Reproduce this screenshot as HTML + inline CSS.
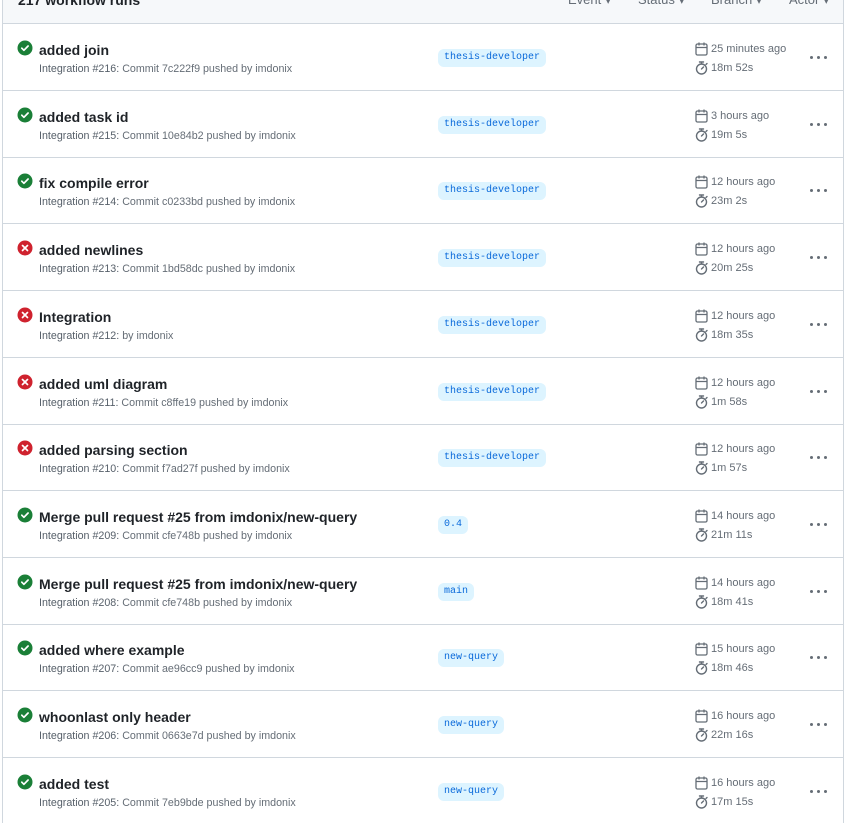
<!DOCTYPE html>
<html><head><meta charset="utf-8"><style>
*{box-sizing:border-box;margin:0;padding:0}
html,body{width:846px;height:823px;overflow:hidden}
body{background:#fff;font-family:"Liberation Sans",sans-serif;color:#1f2328;position:relative}
.box{position:absolute;left:2px;top:-10px;width:842px;height:840px;border:1px solid #d0d7de;}
.hdr{position:absolute;left:3px;top:-10px;width:840px;height:34px;background:#f6f8fa;border-bottom:1px solid #d0d7de}
.hdr .t{position:absolute;left:15px;top:0;font-size:14px;font-weight:bold;color:#1f2328;line-height:20px}
.hdr .f{position:absolute;top:0;font-size:13px;color:#656d76;line-height:20px}
.row{position:absolute;left:3px;width:840px;height:67px;border-bottom:1px solid #d0d7de}
.ic{position:absolute;left:14px;top:16px;width:16px;height:16px}
.ti{position:absolute;left:36px;top:16px;font-size:14px;font-weight:bold;line-height:20px;color:#1f2328}
.su{position:absolute;left:36px;top:37px;font-size:10.7px;line-height:16px;color:#656d76}
.su b{font-weight:normal;color:#57606a}
.br{position:absolute;left:435px;top:25px;height:18px;padding:0 6px;border-radius:6px;background:#ddf4ff;color:#0969da;font-family:"Liberation Mono",monospace;font-size:10px;line-height:18px}
.d1,.d2{position:absolute;left:692px;font-size:11px;color:#656d76;line-height:16px;padding-left:16px}
.d1{top:17px}.d2{top:36px}
.d1 svg,.d2 svg{position:absolute;left:0;top:1px}
.dots{position:absolute;left:807px;top:32px;width:18px;height:3px}
.dots i{position:absolute;top:0;width:3px;height:3px;border-radius:50%;background:#656d76}
</style></head><body>
<div class="box"></div>
<div class="hdr"><div class="t">217 workflow runs</div>
<div class="f" style="left:565px">Event ▾</div><div class="f" style="left:635px">Status ▾</div><div class="f" style="left:708px">Branch ▾</div><div class="f" style="left:786px">Actor ▾</div></div>
<div id="rows"></div>
<script>
const ok='<svg class="ic" viewBox="0 0 16 16"><circle cx="8" cy="8" r="7.5" fill="#1a7f37"/><path d="M4.8 8.2l2.1 2.1 4.2-4.3" stroke="#fff" stroke-width="1.7" fill="none" stroke-linecap="round" stroke-linejoin="round"/></svg>';
const bad='<svg class="ic" viewBox="0 0 16 16"><circle cx="8" cy="8" r="7.5" fill="#cf222e"/><path d="M5.5 5.5l5 5M10.5 5.5l-5 5" stroke="#fff" stroke-width="1.7" stroke-linecap="round"/></svg>';
const cal='<svg width="13" height="14" viewBox="0 0 13 14"><rect x="1" y="2" width="11" height="11" rx="1.5" fill="none" stroke="#656d76" stroke-width="1.3"/><path d="M1 5.5h11M4 0.5v3M9 0.5v3" stroke="#656d76" stroke-width="1.3"/></svg>';
const sw='<svg width="13" height="14" viewBox="0 0 13 14"><circle cx="6.5" cy="8" r="5" fill="none" stroke="#656d76" stroke-width="1.4"/><path d="M4.5 1h4M6.5 1v2M6.5 8l2-2M11 3.5l1-1" stroke="#656d76" stroke-width="1.4" stroke-linecap="round"/></svg>';
const d=[
[1,'added join','#216','Commit 7c222f9 pushed by imdonix','thesis-developer','25 minutes ago','18m 52s'],
[1,'added task id','#215','Commit 10e84b2 pushed by imdonix','thesis-developer','3 hours ago','19m 5s'],
[1,'fix compile error','#214','Commit c0233bd pushed by imdonix','thesis-developer','12 hours ago','23m 2s'],
[0,'added newlines','#213','Commit 1bd58dc pushed by imdonix','thesis-developer','12 hours ago','20m 25s'],
[0,'Integration','#212','by imdonix','thesis-developer','12 hours ago','18m 35s'],
[0,'added uml diagram','#211','Commit c8ffe19 pushed by imdonix','thesis-developer','12 hours ago','1m 58s'],
[0,'added parsing section','#210','Commit f7ad27f pushed by imdonix','thesis-developer','12 hours ago','1m 57s'],
[1,'Merge pull request #25 from imdonix/new-query','#209','Commit cfe748b pushed by imdonix','0.4','14 hours ago','21m 11s'],
[1,'Merge pull request #25 from imdonix/new-query','#208','Commit cfe748b pushed by imdonix','main','14 hours ago','18m 41s'],
[1,'added where example','#207','Commit ae96cc9 pushed by imdonix','new-query','15 hours ago','18m 46s'],
[1,'whoonlast only header','#206','Commit 0663e7d pushed by imdonix','new-query','16 hours ago','22m 16s'],
[1,'added test','#205','Commit 7eb9bde pushed by imdonix','new-query','16 hours ago','17m 15s']];
let h='';
d.forEach((r,i)=>{const top=Math.round(24+i*66.7);
h+=`<div class="row" style="top:${top}px">${r[0]?ok:bad}<div class="ti">${r[1]}</div><div class="su"><b>Integration ${r[2]}:</b> ${r[3]}</div><div class="br">${r[4]}</div><div class="d1">${cal}${r[5]}</div><div class="d2">${sw}${r[6]}</div><div class="dots"><i style="left:0"></i><i style="left:7px"></i><i style="left:14px"></i></div></div>`;});
document.getElementById('rows').innerHTML=h;
</script>
</body></html>
